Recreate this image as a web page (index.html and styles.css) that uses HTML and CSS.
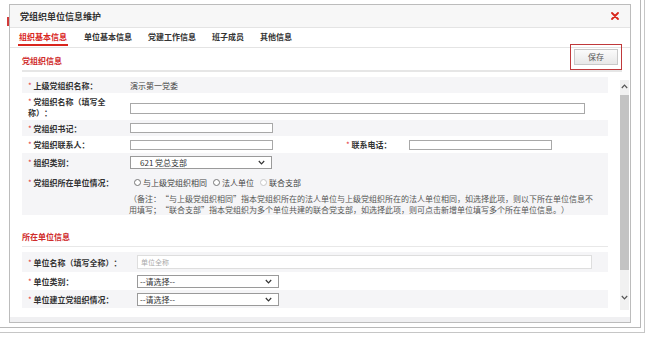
FILE: index.html
```html
<!DOCTYPE html>
<html lang="zh-CN">
<head>
    <meta charset="UTF-8">
    <meta name="viewport" content="width=device-width, initial-scale=1.0">
    <title>党组织单位信息维护</title>
    <link rel="stylesheet" href="styles.css">
</head>
<body>
    <div class="frame">
        <div class="screen">
            <div class="tick"></div>
            <div class="dialog">
                <div class="dlg-head">
                    <div class="dlg-title">党组织单位信息维护</div>
                    <svg class="close" width="8" height="8" viewBox="0 0 8 8">
                        <path d="M1 1 L7 7 M7 1 L1 7" stroke="#d8261c" stroke-width="1.8" stroke-linecap="round"/>
                    </svg>
                </div>

                <div class="tabs">
                    <div class="tab active">组织基本信息</div>
                    <div class="tab">单位基本信息</div>
                    <div class="tab">党建工作信息</div>
                    <div class="tab">班子成员</div>
                    <div class="tab">其他信息</div>
                </div>

                <div class="toolbar">
                    <div class="section-title">党组织信息</div>
                    <span class="highlight"><button class="btn-save" type="button">保存</button></span>
                </div>

                <div class="main">
                    <div class="form">
                        <div class="row alt h16">
                            <div class="label"><span class="star">*</span> 上级党组织名称：</div>
                            <div class="text">演示第一党委</div>
                        </div>
                        <div class="row h27">
                            <div class="label"><span class="star">*</span> 党组织名称（填写全<br>称）：</div>
                            <input class="input long" type="text">
                        </div>
                        <div class="row alt h16">
                            <div class="label"><span class="star">*</span> 党组织书记：</div>
                            <input class="input short" type="text">
                        </div>
                        <div class="row h17">
                            <div class="label"><span class="star">*</span> 党组织联系人：</div>
                            <input class="input short" type="text">
                            <div class="label mid"><span class="star">*</span> 联系电话：</div>
                            <input class="input short" type="text">
                        </div>
                        <div class="row alt h19">
                            <div class="label"><span class="star">*</span> 组织类别：</div>
                            <div class="select pad">
                                <span>621 党总支部</span>
                                <svg width="7" height="5" viewBox="0 0 7 5"><path d="M0.8 1 L3.5 3.8 L6.2 1" fill="none" stroke="#333" stroke-width="1.2"/></svg>
                            </div>
                        </div>
                        <div class="block alt">
                            <div class="row h16">
                                <div class="label"><span class="star">*</span> 党组织所在单位情况：</div>
                                <div class="radios">
                                    <span class="radio-item"><span class="radio"></span>与上级党组织相同</span>
                                    <span class="radio-item"><span class="radio"></span>法人单位</span>
                                    <span class="radio-item"><span class="radio off"></span>联合支部</span>
                                </div>
                            </div>
                            <div class="remark">（备注：“与上级党组织相同”指本党组织所在的法人单位与上级党组织所在的法人单位相同，如选择此项，则以下所在单位信息不<br>用填写；“联合支部”指本党组织为多个单位共建的联合党支部，如选择此项，则可点击新增单位填写多个所在单位信息。）</div>
                        </div>

                        <div class="section2">
                            <div class="section-title">所在单位信息</div>
                        </div>

                        <div class="rows2">
                            <div class="row alt h20">
                                <div class="label wide"><span class="star">*</span> 单位名称（填写全称）：</div>
                                <input class="input unit" type="text" placeholder="单位全称">
                            </div>
                            <div class="row h18">
                                <div class="label wide"><span class="star">*</span> 单位类别：</div>
                                <div class="select">
                                    <span>--请选择--</span>
                                    <svg width="7" height="5" viewBox="0 0 7 5"><path d="M0.8 1 L3.5 3.8 L6.2 1" fill="none" stroke="#333" stroke-width="1.2"/></svg>
                                </div>
                            </div>
                            <div class="row alt h18">
                                <div class="label wide"><span class="star">*</span> 单位建立党组织情况：</div>
                                <div class="select">
                                    <span>--请选择--</span>
                                    <svg width="7" height="5" viewBox="0 0 7 5"><path d="M0.8 1 L3.5 3.8 L6.2 1" fill="none" stroke="#333" stroke-width="1.2"/></svg>
                                </div>
                            </div>
                        </div>
                    </div>

                    <div class="scrollbar">
                        <div class="sb-btn">
                            <svg width="7" height="5" viewBox="0 0 7 5"><path d="M0.8 4 L3.5 1.2 L6.2 4" fill="none" stroke="#555" stroke-width="1.2"/></svg>
                        </div>
                        <div class="sb-track"><div class="sb-thumb"></div></div>
                        <div class="sb-btn">
                            <svg width="7" height="5" viewBox="0 0 7 5"><path d="M0.8 1 L3.5 3.8 L6.2 1" fill="none" stroke="#555" stroke-width="1.2"/></svg>
                        </div>
                    </div>
                </div>

                <div class="dlg-foot"></div>
            </div>
        </div>
    </div>
</body>
</html>
```

FILE: styles.css
```css
body {
    margin: 0;
    padding: 0;
    background-color: #fff;
    font-family: "Noto Sans CJK SC", "Noto Sans", sans-serif;
    color: #333;
    text-spacing-trim: space-all;
}

/* outer window border on the right and bottom */
.frame {
    width: 645px;
    height: 333px;
    box-sizing: border-box;
    padding: 0 3px 4px 0;
    border-right: 1px solid #c6c6c6;
    border-bottom: 1px solid #c6c6c6;
}

.screen {
    height: 100%;
    box-sizing: border-box;
    padding: 4px 0 0 7px;
    border-right: 1px solid #b8b8b8;
    border-bottom: 1px solid #b8b8b8;
    display: flex;
    align-items: flex-start;
}

/* bit of the red page behind the dialog */
.tick {
    width: 2px;
    height: 9px;
    margin-top: 13px;
    background-color: #d23a3a;
}

.dialog {
    width: 622px;
    height: 319px;
    box-sizing: border-box;
    border: 1px solid #bcbcbc;
    background-color: #fff;
    display: flex;
    flex-direction: column;
}

.dlg-head {
    height: 22px;
    flex: 0 0 22px;
    background-color: #f7f7f7;
    border-bottom: 1px solid #e4e4e4;
    display: flex;
    align-items: center;
    justify-content: space-between;
    padding: 0 11px 0 10px;
}

.dlg-title {
    font-size: 9px;
    font-weight: bold;
    color: #333;
}

.tabs {
    height: 19px;
    flex: 0 0 19px;
    border-bottom: 1px solid #e4e4e4;
    display: flex;
    gap: 16px;
    padding-left: 10px;
}

.tab {
    height: 16px;
    line-height: 17px;
    font-size: 8px;
    font-weight: bold;
    color: #333;
}

.tab.active {
    color: #d9251d;
    border-bottom: 2px solid #d9251d;
    padding: 0 1px;
    margin-left: -2px;
}

.toolbar {
    height: 22px;
    flex: 0 0 22px;
    margin: 0 8px 0 12px;
    border-bottom: 2px solid #e6e6e6;
    display: flex;
    align-items: center;
    justify-content: space-between;
}

.section-title {
    font-size: 8px;
    font-weight: bold;
    color: #cf2b2b;
    line-height: 11px;
}

.toolbar .section-title {
    padding-top: 3px;
}

/* red box drawn round the save button */
.highlight {
    display: block;
    border: 1.5px solid #c0393b;
    padding: 4px 3px;
    margin-bottom: 5px;
}

.btn-save {
    display: block;
    width: 44px;
    height: 16px;
    padding: 0;
    border: 1px solid #c9c9c9;
    background: linear-gradient(#fbfbfb, #e8e8e8);
    font-family: "Noto Sans CJK SC", sans-serif;
    font-size: 8px;
    color: #555;
}

.main {
    height: 238px;
    flex: 0 0 238px;
    display: flex;
}

.form {
    width: 586px;
    margin-left: 12px;
    padding-top: 5px;
}

.row {
    display: flex;
    align-items: center;
}

.row.alt,
.block.alt {
    background-color: #f5f5f7;
}

.h16 { height: 16px; }
.h17 { height: 17px; }
.h18 { height: 18px; }
.h19 { height: 19px; }
.h20 { height: 20px; }
.h27 { height: 27px; }

.label {
    flex: 0 0 108px;
    min-width: 0;
    box-sizing: border-box;
    padding-left: 6px;
    font-size: 8px;
    font-weight: bold;
    line-height: 11px;
    color: #333;
    white-space: nowrap;
}

.label.wide {
    flex-basis: 115px;
}

.label.mid {
    flex: 0 0 63px;
    padding-left: 0;
    margin-left: 73px;
}

.star {
    color: #e4393c;
    font-weight: normal;
}

.text {
    font-size: 8px;
    color: #444;
}

.input {
    box-sizing: border-box;
    height: 10px;
    padding: 0 3px;
    border: 1px solid #a8a8a8;
    background-color: #fff;
    font-family: "Noto Sans CJK SC", sans-serif;
    font-size: 7px;
    outline: none;
}

.input.long {
    width: 455px;
    height: 11px;
    margin-top: 3px;
}

.input.short {
    width: 143px;
}

.input.unit {
    width: 455px;
    height: 14px;
    border-color: #dedede;
}

.input.unit::placeholder {
    color: #aaa;
}

.select {
    box-sizing: border-box;
    width: 142px;
    height: 13px;
    border: 1px solid #9a9a9a;
    background-color: #fff;
    display: flex;
    align-items: center;
    justify-content: space-between;
    padding: 0 6px 0 2px;
    font-size: 8px;
    color: #333;
}

.select.pad {
    padding-left: 9px;
}

.block {
    height: 43px;
    box-sizing: border-box;
    padding-top: 2px;
}

.radios {
    display: flex;
    gap: 6px;
    margin-left: 4px;
}

.radio-item {
    display: flex;
    align-items: center;
    font-size: 8px;
    color: #444;
}

.radio {
    width: 5px;
    height: 5px;
    border: 1px solid #777;
    border-radius: 50%;
    margin-right: 2px;
    background-color: #fff;
}

.radio.off {
    border-color: #c8c8c8;
}

.remark {
    margin: 3px 0 0 107px;
    font-size: 8px;
    line-height: 11px;
    color: #555;
    white-space: nowrap;
}

.section2 {
    height: 27px;
    border-bottom: 1px solid #e8e8e8;
    display: flex;
    align-items: flex-end;
    padding-bottom: 4px;
}

.rows2 {
    padding-top: 5px;
}

.scrollbar {
    width: 9px;
    height: 230px;
    margin: 8px 0 0 12px;
    background-color: #f1f1f1;
    display: flex;
    flex-direction: column;
}

.sb-btn {
    height: 13px;
    display: flex;
    align-items: center;
    justify-content: center;
}

.sb-track {
    flex: 1;
    padding-top: 2px;
}

.sb-thumb {
    height: 175px;
    background-color: #c3c3c3;
}

.scrollbar .sb-btn:last-child {
    margin-bottom: 6px;
}

.dlg-foot {
    flex: 1;
    border-bottom: 5px solid #f0f0f2;
}
```
